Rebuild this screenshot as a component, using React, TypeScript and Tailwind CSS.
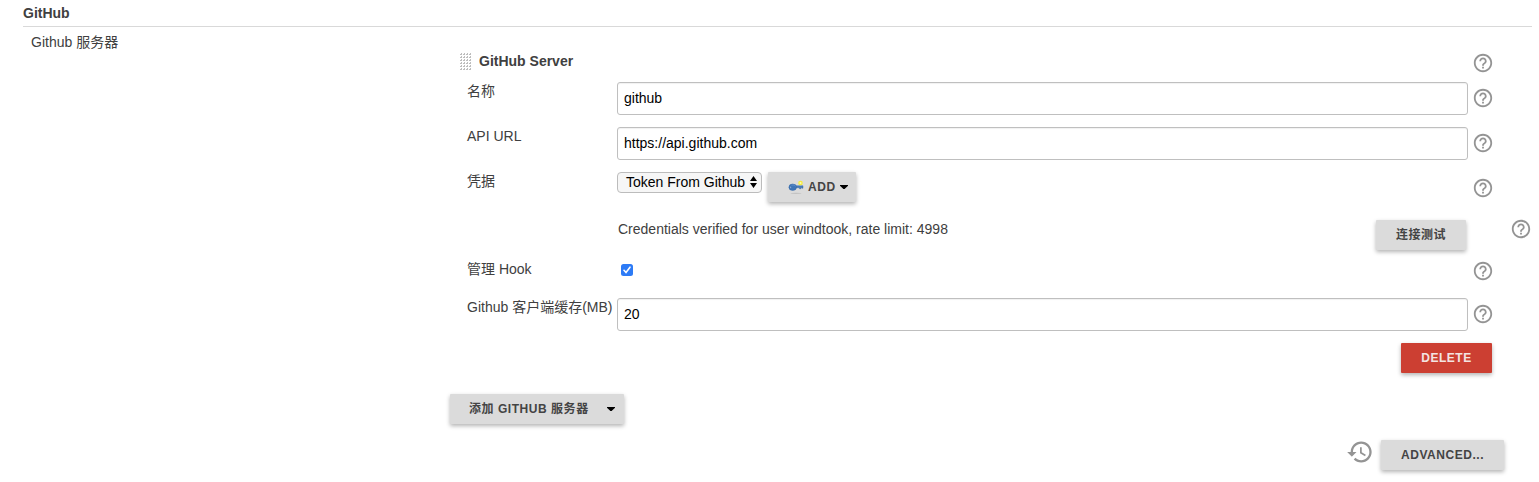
import React from "react";

const HELP =
  "M11 18h2v-2h-2v2zm1-16C6.48 2 2 6.48 2 12s4.48 10 10 10 10-4.48 10-10S17.52 2 12 2zm0 18c-4.41 0-8-3.59-8-8s3.59-8 8-8 8 3.59 8 8-3.59 8-8 8zm0-14c-2.21 0-4 1.79-4 4h2c0-1.1.9-2 2-2s2 .9 2 2c0 2-3 1.75-3 5h2c0-2.25 3-2.5 3-5 0-2.21-1.79-4-4-4z";
const HISTORY =
  "M13 3c-4.97 0-9 4.03-9 9H1l3.89 3.89.07.14L9 12H6c0-3.87 3.13-7 7-7s7 3.13 7 7-3.13 7-7 7c-1.93 0-3.68-.79-4.94-2.06l-1.42 1.42C8.27 19.99 10.51 21 13 21c4.97 0 9-4.03 9-9s-4.03-9-9-9zm-1 5v5l4.28 2.54.72-1.21-3.5-2.08V8H12z";

const SHADOW = "shadow-[0_2px_4px_rgba(0,0,0,0.3)]";
const BUTTON = `flex h-[30px] shrink-0 items-center rounded-[1px] text-[12px] font-bold tracking-[0.54px] whitespace-nowrap ${SHADOW}`;
const GRAY = "bg-[#dbdbdb] text-[#444]";

function Help({ className = "" }: { className?: string }) {
  return (
    <svg viewBox="0 0 24 24" className={`h-[22px] w-[22px] shrink-0 fill-[#949494] ${className}`}>
      <path d={HELP} />
    </svg>
  );
}

function Caret() {
  return (
    <svg viewBox="0 0 8 4" className="mb-px h-1 w-2 shrink-0 fill-black">
      <path d="M0 0h8v.8L4.6 4h-1.2L0 .8z" />
    </svg>
  );
}

function Grip() {
  const dots = [];
  for (let r = 0; r < 6; r++)
    for (let c = 0; c < 4; c++) dots.push(<path key={`${r}-${c}`} d={`M${c * 3} ${r * 3 + 1}h1v-1h1v2h-2z`} />);
  return (
    <svg viewBox="0 0 12 18" className="mt-[5px] h-[18px] w-3 shrink-0 fill-[#bdbdbd]">
      {dots}
    </svg>
  );
}

function KeyIcon() {
  return (
    <svg viewBox="0 0 16 16" className="h-4 w-4 shrink-0">
      <ellipse cx="8" cy="14.3" rx="5.5" ry="0.6" fill="#c2c2c2" />
      <path d="M7 6.8h8v2.4h-1v-.5h-1v1h-1.6v-1H7z" fill="#4a7dbb" stroke="#3565a0" strokeWidth=".4" />
      <ellipse cx="4.7" cy="8.2" rx="3.8" ry="3.2" fill="#3f75b8" stroke="#3566a5" strokeWidth=".5" />
      <path d="M3.6 6.3c1.6-.7 3.1-.2 3.9.8" fill="none" stroke="#6797d0" strokeWidth=".8" />
      <ellipse cx="2.6" cy="8.4" rx=".6" ry=".8" fill="#8fabd0" />
      <circle cx="12.5" cy="4" r="2.3" fill="#f5ec3d" />
      <circle cx="12.5" cy="4" r="1" fill="#fffbb0" />
    </svg>
  );
}

function TextField({ value }: { value: string }) {
  return (
    <input
      defaultValue={value}
      className="h-[33px] w-[851px] shrink-0 rounded-[3px] border border-[#bfbfbf] bg-white px-1.5 pb-[2px] text-[14px] text-black shadow-[inset_0_1px_1px_rgba(0,0,0,0.06)] outline-none"
    />
  );
}

function Row({
  label,
  height,
  labelTop = "pt-0",
  helpTop,
  children,
}: {
  label: string;
  height: string;
  labelTop?: string;
  helpTop: string;
  children: React.ReactNode;
}) {
  return (
    <div className={`flex items-start ${height}`}>
      <div className={`w-[150px] shrink-0 leading-[18px] whitespace-nowrap ${labelTop}`}>{label}</div>
      <div className="flex w-[855px] shrink-0 items-start">{children}</div>
      <Help className={helpTop} />
    </div>
  );
}

export default function App() {
  return (
    <div className="h-[482px] w-[1539px] overflow-hidden bg-white font-['Liberation_Sans','Noto_Sans_CJK_SC',sans-serif] text-[14px] text-[#404040]">
      <h2 className="ml-[23px] h-[27px] w-[1509px] border-b border-[#d9d9d9] pt-1 leading-[18px] font-bold">GitHub</h2>
      <div className="flex">
        <div className="w-[450px] shrink-0 pt-[6px] pl-[31px] leading-[18px]">Github 服务器</div>
        <div className="w-[1089px] pt-[21px]">
          <div className="pl-[17px]">
            <div className="-ml-[7px] flex h-[34px] items-start">
              <Grip />
              <div className="w-[1000px] pt-1 pl-[7px] leading-[18px] font-bold">GitHub Server</div>
              <Help className="mt-[4px]" />
            </div>
            <Row label="名称" height="h-[45px]" helpTop="mt-[5px]">
              <TextField value="github" />
            </Row>
            <Row label="API URL" height="h-[45px]" helpTop="mt-[5px]">
              <TextField value="https://api.github.com" />
            </Row>
            <Row label="凭据" height="h-[48px]" helpTop="mt-[5px]">
              <div className="flex h-[21px] w-[145px] items-center justify-between rounded-[4px] border border-[#bcbcbc] bg-[#f6f6f6] pr-[4px] pl-2 whitespace-nowrap text-black">
                <span>Token From Github</span>
                <svg viewBox="0 0 7 12" className="mb-px h-3 w-[7px] shrink-0 fill-black">
                  <path d="M3.5 0L7 5H0zM3.5 12L0 7h7z" />
                </svg>
              </div>
              <button className={`${BUTTON} ${GRAY} ml-[6px] w-[88px] pl-5`}>
                <KeyIcon />
                <span className="mr-1 ml-1">ADD</span>
                <Caret />
              </button>
            </Row>
            <div className="flex h-[39px] items-start">
              <div className="w-[909px] pl-[151px] leading-[18px]">
                Credentials verified for user windtook, rate limit: 4998
              </div>
              <button className={`${BUTTON} ${GRAY} w-[90px] justify-center`}>连接测试</button>
              <Help className="-mt-[2px] ml-[44px]" />
            </div>
            <Row label="管理 Hook" height="h-[39px]" labelTop="pt-[1px]" helpTop="mt-[1px]">
              <svg viewBox="0 0 12 12" className="mt-[5px] ml-[4px] h-3 w-3">
                <rect width="12" height="12" rx="2.5" fill="#2d7bf6" />
                <path d="M3 6.3l2 2.2 4-5.3" fill="none" stroke="#fff" strokeWidth="1.6" strokeLinecap="round" />
              </svg>
            </Row>
            <Row label="Github 客户端缓存(MB)" height="h-[45px]" helpTop="mt-[5px]">
              <TextField value="20" />
            </Row>
            <div className="flex w-[1025px] justify-end">
              <button className={`${BUTTON} w-[91px] justify-center bg-[#cc3f32] text-[#f3e4e2]`}>DELETE</button>
            </div>
          </div>
          <button className={`${BUTTON} ${GRAY} mt-[21px] w-[174px] justify-between pr-[9px] pl-[19px]`}>
            <span>添加 GITHUB 服务器</span>
            <Caret />
          </button>
          <div className="mt-[14px] flex w-[1054px] items-start justify-end">
            <svg viewBox="0 0 24 24" className="mr-[7px] h-7 w-7 fill-[#949494]">
              <path d={HISTORY} />
            </svg>
            <button className={`${BUTTON} ${GRAY} mt-[2px] w-[123px] justify-center`}>ADVANCED...</button>
          </div>
        </div>
      </div>
    </div>
  );
}
